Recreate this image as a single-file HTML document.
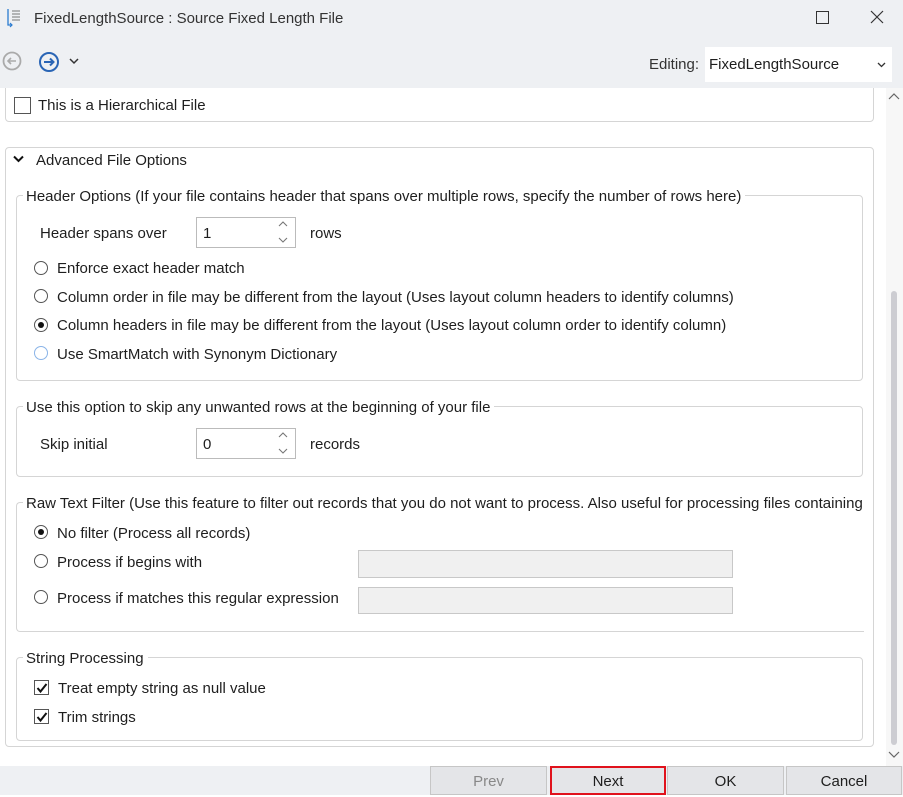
<!DOCTYPE html>
<html><head><meta charset="utf-8"><style>
*{box-sizing:border-box;margin:0;padding:0}
body{width:903px;height:795px;position:relative;overflow:hidden;background:#fff;font-family:"Liberation Sans",sans-serif;font-size:15px;color:#1e1e1e;letter-spacing:0}
.a{position:absolute;white-space:nowrap}
.t{position:absolute;white-space:nowrap;line-height:18px;padding-top:1px}
.box{position:absolute;border:1px solid #d5d5d5;border-radius:4px}
.leg{position:absolute;background:#fff;padding:1px 4px 0 3px;line-height:18px;white-space:nowrap}
.rad{position:absolute;width:14px;height:14px;border:1px solid #555;border-radius:50%;background:#fff}
.rad.on::after{content:"";position:absolute;left:3px;top:3px;width:6px;height:6px;border-radius:50%;background:#111}
.chk{position:absolute;width:15px;height:15px;border:1px solid #555;background:#fff}
.spin{position:absolute;width:100px;height:31px;border:1px solid #bbb;background:#fff}
.inp{position:absolute;border:1px solid #c8c8c8;background:#f0f0f0}
.btn{position:absolute;top:766px;height:29px;background:#e4e5e8;border:1px solid #c6c6c6;text-align:center;line-height:30px;font-size:15px}
</style></head><body>
<div class="box" style="left:5px;top:70px;width:869px;height:52px"></div>
<div class="a" style="left:0;top:0;width:903px;height:88px;background:#eef0f3"></div>
<svg class="a" style="left:4px;top:7px" width="22" height="22" viewBox="0 0 22 22"><path d="M4 2v16h4" fill="none" stroke="#2a7bd0" stroke-width="1.3"/><path d="M6 16l2 2-2 2" fill="none" stroke="#2a7bd0" stroke-width="1.2"/><path d="M8 4h8M8 7h8M8 10h8M8 13h8" stroke="#777" stroke-width="1"/></svg>
<div class="t" style="left:34px;top:9px;color:#333">FixedLengthSource : Source Fixed Length File</div>
<div class="a" style="left:816px;top:11px;width:13px;height:13px;border:1.3px solid #333"></div>
<svg class="a" style="left:870px;top:10px" width="14" height="14"><path d="M1 1L13 13M13 1L1 13" stroke="#333" stroke-width="1.2"/></svg>
<svg class="a" style="left:2px;top:51px" width="20" height="20"><circle cx="10" cy="10" r="8.5" fill="none" stroke="#aaa" stroke-width="1.8"/><path d="M14 10H6M9 7l-3 3 3 3" fill="none" stroke="#aaa" stroke-width="1.6"/></svg>
<svg class="a" style="left:38px;top:51px" width="22" height="22"><circle cx="11" cy="11" r="9" fill="none" stroke="#2a65b5" stroke-width="2"/><path d="M6 11h9M12 7.5l3.5 3.5-3.5 3.5" fill="none" stroke="#2a65b5" stroke-width="2"/></svg>
<svg class="a" style="left:69px;top:57px" width="10" height="8"><path d="M1 2l4 4 4-4" fill="none" stroke="#333" stroke-width="1.5"/></svg>
<div class="t" style="left:649px;top:55px;color:#333">Editing:</div>
<div class="a" style="left:705px;top:47px;width:187px;height:35px;background:#fff"></div>
<div class="t" style="left:709px;top:55px">FixedLengthSource</div>
<svg class="a" style="left:877px;top:62px" width="9" height="6"><path d="M1 1l3.5 3.5L8 1" fill="none" stroke="#333" stroke-width="1.3"/></svg>

<div class="chk" style="left:14px;top:97px;width:17px;height:17px"></div>
<div class="t" style="left:38px;top:96px">This is a Hierarchical File</div>

<div class="a" style="left:886px;top:88px;width:17px;height:678px;background:#f7f7f7"></div>
<svg class="a" style="left:888px;top:93px" width="12" height="8"><path d="M1 6l5-5 5 5" fill="none" stroke="#666" stroke-width="1.2"/></svg>
<div class="a" style="left:891px;top:291px;width:6px;height:454px;background:#cdcdd2;border-radius:3px"></div>
<svg class="a" style="left:888px;top:751px" width="12" height="8"><path d="M1 1l5 5 5-5" fill="none" stroke="#666" stroke-width="1.2"/></svg>

<div class="box" style="left:5px;top:147px;width:869px;height:600px"></div>
<svg class="a" style="left:13px;top:155px" width="11" height="8"><path d="M1 1.5l4.5 4.5L10 1.5" fill="none" stroke="#111" stroke-width="2"/></svg>
<div class="t" style="left:36px;top:151px">Advanced File Options</div>

<div class="box" style="left:16px;top:195px;width:847px;height:186px"></div>
<div class="leg" style="left:23px;top:187px">Header Options (If your file contains header that spans over multiple rows, specify the number of rows here)</div>
<div class="t" style="left:40px;top:224px">Header spans over</div>
<div class="spin" style="left:196px;top:217px"></div>
<div class="t" style="left:203px;top:224px">1</div>
<svg class="a" style="left:277px;top:220px" width="12" height="26"><path d="M2 6l4-4 4 4M2 18l4 4 4-4" fill="none" stroke="#777" stroke-width="1.1"/></svg>
<div class="t" style="left:310px;top:224px">rows</div>
<div class="rad" style="left:34px;top:261px"></div><div class="t" style="left:57px;top:259px">Enforce exact header match</div>
<div class="rad" style="left:34px;top:289px"></div><div class="t" style="left:57px;top:288px">Column order in file may be different from the layout (Uses layout column headers to identify columns)</div>
<div class="rad on" style="left:34px;top:318px"></div><div class="t" style="left:57px;top:316px">Column headers in file may be different from the layout (Uses layout column order to identify column)</div>
<div class="rad" style="left:34px;top:346px;border-color:#8ab4e8"></div><div class="t" style="left:57px;top:345px">Use SmartMatch with Synonym Dictionary</div>

<div class="box" style="left:16px;top:406px;width:847px;height:71px"></div>
<div class="leg" style="left:23px;top:398px">Use this option to skip any unwanted rows at the beginning of your file</div>
<div class="t" style="left:40px;top:435px">Skip initial</div>
<div class="spin" style="left:196px;top:428px"></div>
<div class="t" style="left:203px;top:435px">0</div>
<svg class="a" style="left:277px;top:431px" width="12" height="26"><path d="M2 6l4-4 4 4M2 18l4 4 4-4" fill="none" stroke="#777" stroke-width="1.1"/></svg>
<div class="t" style="left:310px;top:435px">records</div>

<div class="box" style="left:16px;top:502px;width:848px;height:130px;border-right:none;border-radius:4px 0 0 4px"></div>
<div class="a" style="left:862px;top:500px;width:11px;height:131px;background:#fff"></div>
<div class="a" style="left:23px;top:494px;width:840px;height:19px;overflow:hidden"><div class="leg" style="left:0;top:0;padding-right:0">Raw Text Filter (Use this feature to filter out records that you do not want to process. Also useful for processing files containing</div></div>
<div class="rad on" style="left:34px;top:525px"></div><div class="t" style="left:57px;top:524px">No filter (Process all records)</div>
<div class="rad" style="left:34px;top:554px"></div><div class="t" style="left:57px;top:553px">Process if begins with</div>
<div class="inp" style="left:358px;top:550px;width:375px;height:28px"></div>
<div class="rad" style="left:34px;top:590px"></div><div class="t" style="left:57px;top:589px">Process if matches this regular expression</div>
<div class="inp" style="left:358px;top:587px;width:375px;height:27px"></div>

<div class="box" style="left:16px;top:657px;width:847px;height:84px"></div>
<div class="leg" style="left:23px;top:649px">String Processing</div>
<div class="chk" style="left:34px;top:680px"></div>
<svg class="a" style="left:36px;top:682px" width="12" height="12"><path d="M1.5 6l3 3.5L10.5 2" fill="none" stroke="#111" stroke-width="2"/></svg>
<div class="t" style="left:58px;top:679px">Treat empty string as null value</div>
<div class="chk" style="left:34px;top:709px"></div>
<svg class="a" style="left:36px;top:711px" width="12" height="12"><path d="M1.5 6l3 3.5L10.5 2" fill="none" stroke="#111" stroke-width="2"/></svg>
<div class="t" style="left:58px;top:708px">Trim strings</div>

<div class="a" style="left:0;top:766px;width:903px;height:29px;background:#eef0f3"></div>
<div class="btn" style="left:430px;width:117px;color:#888">Prev</div>
<div class="btn" style="left:550px;width:116px;border:2px solid #e0121c;line-height:28px">Next</div>
<div class="btn" style="left:667px;width:117px">OK</div>
<div class="btn" style="left:786px;width:116px">Cancel</div>
</body></html>
